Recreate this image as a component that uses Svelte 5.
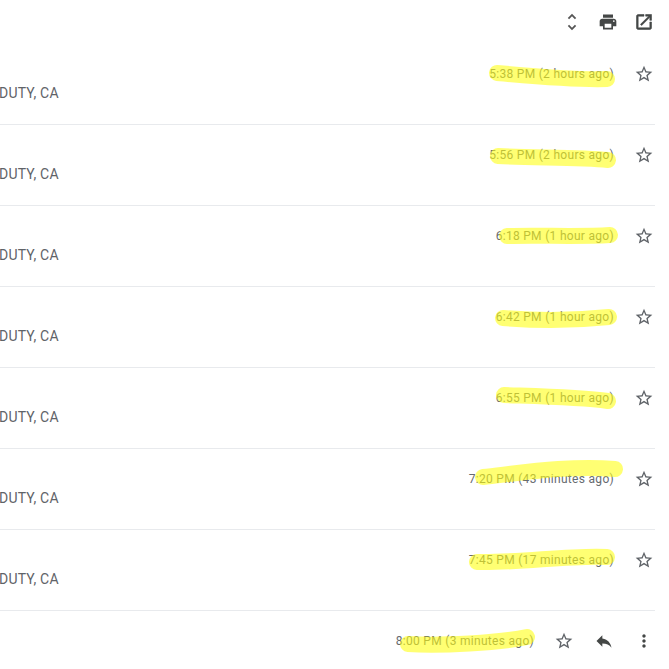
<script>
	const rows = [
		{ time: '5:38 PM (2 hours ago)' },
		{ time: '5:56 PM (2 hours ago)' },
		{ time: '6:18 PM (1 hour ago)' },
		{ time: '6:42 PM (1 hour ago)' },
		{ time: '6:55 PM (1 hour ago)' },
		{ time: '7:20 PM (43 minutes ago)' },
		{ time: '7:45 PM (17 minutes ago)' }
	];

	// marker strokes someone drew over the screenshot
	const marks = [
		'M497 73 C530 76 580 80 607 79',
		'M498 156 C530 158 580 157 608 160',
		'M507 236 C540 235 580 237 610 235',
		'M503 318 C540 321 580 320 609 317',
		'M504 395 C530 396 580 397 608 401',
		'M483 477 C520 473 570 465 615 469',
		'M477 562 C520 563 570 555 607 557',
		'M408 644 C440 646 500 643 527 637'
	];

	const icons = {
		unfold: 'M12 5.83L15.17 9l1.41-1.41L12 3 7.41 7.59 8.83 9 12 5.83zm0 12.34L8.83 15l-1.41 1.41L12 21l4.59-4.59L15.17 15 12 18.17z',
		print: 'M19 8H5c-1.66 0-3 1.34-3 3v6h4v4h12v-4h4v-6c0-1.66-1.34-3-3-3zm-3 11H8v-5h8v5zm3-7c-.55 0-1-.45-1-1s.45-1 1-1 1 .45 1 1-.45 1-1 1zm-1-9H6v4h12V3z',
		open: 'M19 19H5V5h7V3H5c-1.11 0-2 .9-2 2v14c0 1.1.89 2 2 2h14c1.1 0 2-.9 2-2v-7h-2v7zM14 3v2h3.59l-9.83 9.83 1.41 1.41L19 6.41V10h2V3h-7z',
		star: 'M22 9.24l-7.19-.62L12 2 9.19 8.63 2 9.24l5.46 4.73L5.82 21 12 17.27 18.18 21l-1.63-7.03L22 9.24zM12 15.4l-3.76 2.27 1-4.28-3.32-2.88 4.38-.38L12 6.1l1.71 4.04 4.38.38-3.32 2.88 1 4.28L12 15.4z',
		reply: 'M10 9V5l-7 7 7 7v-4.1c5 0 8.5 1.6 11 5.1-1-5-4-10-11-11z',
		more: 'M12 8c1.1 0 2-.9 2-2s-.9-2-2-2-2 .9-2 2 .9 2 2 2zm0 2c-1.1 0-2 .9-2 2s.9 2 2 2 2-.9 2-2-.9-2-2-2zm0 6c-1.1 0-2 .9-2 2s.9 2 2 2 2-.9 2-2-.9-2-2-2z'
	};
</script>

<main class="page">
	<div class="toolbar">
		<button class="tool unfold"><svg viewBox="0 0 24 24"><path d={icons.unfold} /></svg></button>
		<button class="tool"><svg viewBox="0 0 24 24"><path d={icons.print} /></svg></button>
		<button class="tool open"><svg viewBox="0 0 24 24"><path d={icons.open} /></svg></button>
	</div>

	{#each rows as row}
		<div class="message">
			<div class="head">
				<span class="time">{row.time}</span>
				<button class="action star"><svg viewBox="0 0 24 24"><path d={icons.star} /></svg></button>
			</div>
			<div class="sender">DUTY, CA</div>
		</div>
	{/each}

	<div class="message last">
		<div class="head">
			<span class="time">8:00 PM (3 minutes ago)</span>
			<button class="action star"><svg viewBox="0 0 24 24"><path d={icons.star} /></svg></button>
			<button class="action"><svg viewBox="0 0 24 24"><path d={icons.reply} /></svg></button>
			<button class="action"><svg viewBox="0 0 24 24"><path d={icons.more} /></svg></button>
		</div>
	</div>

	<svg class="marks" viewBox="0 0 669 669">
		{#each marks as d}
			<path {d} />
		{/each}
	</svg>
</main>

<style>
	:global(body) {
		margin: 0;
		background: #fff;
	}

	.page {
		position: relative;
		width: 669px;
		height: 669px;
		overflow: hidden;
		font-family: Roboto, 'Liberation Sans', sans-serif;
		color: #5f6368;
	}

	button {
		display: flex;
		align-items: center;
		justify-content: center;
		padding: 0;
		border: 0;
		background: none;
	}

	.toolbar {
		display: flex;
		justify-content: flex-end;
		align-items: center;
		height: 44px;
		padding-right: 7px;
		box-sizing: border-box;
	}

	.tool {
		width: 36px;
		height: 36px;
	}

	.tool svg {
		width: 20px;
		height: 20px;
		fill: #444746;
	}

	.tool.unfold svg {
		width: 22px;
		height: 22px;
		fill: #555;
	}

	.tool.open svg {
		stroke: #444746;
		stroke-width: 0.7;
	}

	.message {
		box-sizing: border-box;
		width: 655px;
		height: 81px;
		padding-top: 10px;
		border-bottom: 1px solid #e8eaed;
	}

	.message.last {
		border-bottom: 0;
	}

	.head {
		display: flex;
		align-items: center;
		justify-content: flex-end;
		height: 40px;
		margin-right: -9px;
	}

	.time {
		font-size: 12px;
		letter-spacing: 0.3px;
		margin-right: 10px;
		color: #666a6f;
	}

	.action {
		width: 40px;
		height: 40px;
	}

	.action svg {
		width: 20px;
		height: 20px;
		fill: #444746;
	}

	.star svg {
		fill: #5f6368;
	}

	.sender {
		margin: -11px 0 0 -1px;
		font-size: 14px;
		line-height: 20px;
		letter-spacing: 0.2px;
		color: #5f6368;
	}

	.marks {
		position: absolute;
		inset: 0;
		width: 669px;
		height: 669px;
		opacity: 0.58;
		pointer-events: none;
	}

	.marks path {
		fill: none;
		stroke: #ffff10;
		stroke-width: 16;
		stroke-linecap: round;
	}
</style>
